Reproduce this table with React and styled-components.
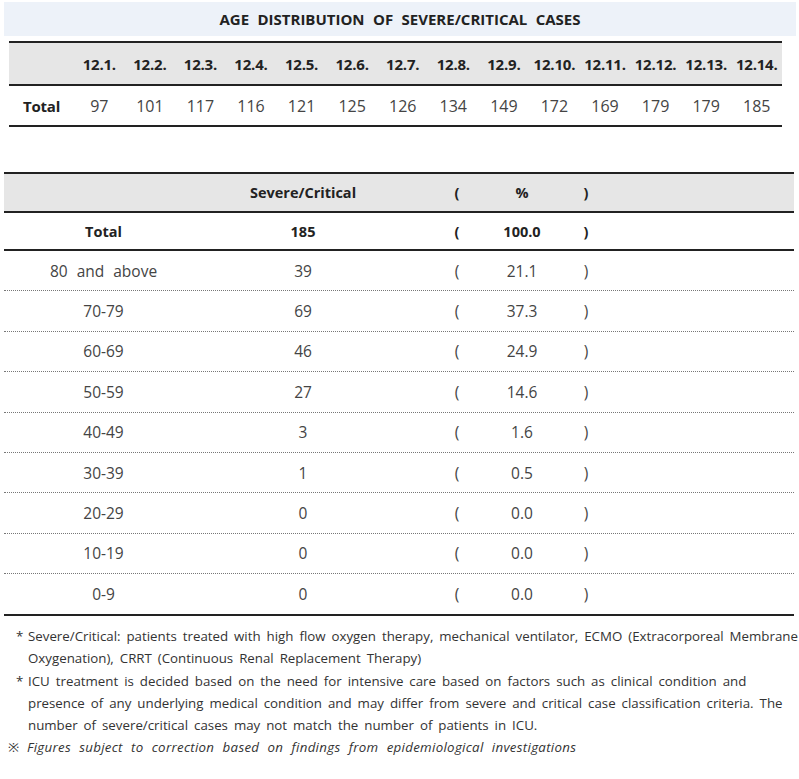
import React from 'react';
import styled, { createGlobalStyle } from 'styled-components';

const GlobalStyle = createGlobalStyle`
  body {
    margin: 0;
    background: #fff;
    font-family: "Open Sans", "Noto Sans", "Noto Sans CJK KR", sans-serif;
    color: #333;
  }
`;

const Page = styled.div`
  width: 799px;
  padding-top: 2px;
`;

const TitleBand = styled.div`
  margin-left: 4px;
  width: 792px;
  height: 34px;
  background: #edf2f9;
  display: flex;
  align-items: center;
  justify-content: center;
  font-weight: 700;
  font-size: 15px;
  color: #222;
  word-spacing: 4.5px;
`;

const TrendTable = styled.div`
  margin: 5px 0 0 9px;
  width: 773px;
  border-top: 2px solid #222;
  border-bottom: 2px solid #222;
`;

const TrendRow = styled.div`
  display: grid;
  grid-template-columns: 65px repeat(14, 1fr);
  align-items: center;
  height: ${p => p.$h}px;
  background: ${p => (p.$head ? '#e6e6e6' : 'transparent')};
  border-bottom: ${p => (p.$head ? '2px solid #222' : 'none')};
`;

const TrendCell = styled.div`
  text-align: center;
  font-size: ${p => (p.$bold ? 15 : 16)}px;
  font-weight: ${p => (p.$bold ? 700 : 400)};
  color: ${p => (p.$bold ? '#222' : '#444')};
  white-space: nowrap;
  letter-spacing: ${p => (p.$bold ? '-0.2px' : '0')};
`;

const AgeTable = styled.div`
  margin: 45px 0 0 4px;
  width: 790px;
  border-top: 2px solid #222;
  border-bottom: 2px solid #222;
`;

const AgeRow = styled.div`
  display: grid;
  grid-template-columns: 199px 227px 54px 76px 52px 1fr;
  align-items: center;
  height: ${p => p.$h}px;
  background: ${p => (p.$head ? '#e6e6e6' : 'transparent')};
  border-bottom: ${p => p.$line};
`;

const AgeCell = styled.div`
  text-align: center;
  font-size: ${p => (p.$bold ? 14.5 : 15.5)}px;
  font-weight: ${p => (p.$bold ? 700 : 400)};
  color: ${p => (p.$bold ? '#222' : '#444')};
  white-space: nowrap;
  word-spacing: 5px;
  padding-right: ${p => p.$pad || 0}px;
`;

const Notes = styled.div`
  padding: 9px 0 0 0;
  font-size: 13.3px;
  line-height: 22.2px;
  color: #333;
`;

const NoteLine = styled.div`
  display: flex;
  white-space: nowrap;
  word-spacing: ${p => (p.$italic ? 4.5 : 2.5)}px;
  letter-spacing: ${p => (p.$italic ? 0.3 : 0)}px;
  padding-left: ${p => p.$indent}px;
  font-style: ${p => (p.$italic ? 'italic' : 'normal')};
`;

const Mark = styled.span`
  display: inline-block;
  width: ${p => p.$w}px;
  font-style: normal;
`;

const dates = ['12.1.', '12.2.', '12.3.', '12.4.', '12.5.', '12.6.', '12.7.', '12.8.', '12.9.', '12.10.', '12.11.', '12.12.', '12.13.', '12.14.'];
const totals = [97, 101, 117, 116, 121, 125, 126, 134, 149, 172, 169, 179, 179, 185];

const ages = [
  ['80 and above', 39, '21.1'],
  ['70-79', 69, '37.3'],
  ['60-69', 46, '24.9'],
  ['50-59', 27, '14.6'],
  ['40-49', 3, '1.6'],
  ['30-39', 1, '0.5'],
  ['20-29', 0, '0.0'],
  ['10-19', 0, '0.0'],
  ['0-9', 0, '0.0'],
];

function AgeLine({ label, count, pct, bold, head, h, line }) {
  return (
    <AgeRow $h={h} $head={head} $line={line}>
      <AgeCell $bold={bold}>{label}</AgeCell>
      <AgeCell $bold={bold || head} $pad={27}>{count}</AgeCell>
      <AgeCell $bold={bold || head}>(</AgeCell>
      <AgeCell $bold={bold || head}>{pct}</AgeCell>
      <AgeCell $bold={bold || head}>)</AgeCell>
      <div />
    </AgeRow>
  );
}

export default function App() {
  return (
    <Page>
      <GlobalStyle />
      <TitleBand>AGE DISTRIBUTION OF SEVERE/CRITICAL CASES</TitleBand>

      <TrendTable>
        <TrendRow $head $h={41}>
          <div />
          {dates.map(d => (
            <TrendCell key={d} $bold>{d}</TrendCell>
          ))}
        </TrendRow>
        <TrendRow $h={39}>
          <TrendCell $bold>Total</TrendCell>
          {totals.map((v, i) => (
            <TrendCell key={i}>{v}</TrendCell>
          ))}
        </TrendRow>
      </TrendTable>

      <AgeTable>
        <AgeLine head h={37} label="" count="Severe/Critical" pct="%" line="2px solid #222" />
        <AgeLine bold h={36} label="Total" count="185" pct="100.0" line="2px solid #222" />
        {ages.map((a, i) => (
          <AgeLine
            key={a[0]}
            h={i === ages.length - 1 ? 40 : 39.4}
            label={a[0]}
            count={a[1]}
            pct={a[2]}
            line={i === ages.length - 1 ? 'none' : '1px dotted #777'}
          />
        ))}
      </AgeTable>

      <Notes>
        <NoteLine $indent={16}>
          <Mark $w={12}>*</Mark>Severe/Critical: patients treated with high flow oxygen therapy, mechanical ventilator, ECMO (Extracorporeal Membrane
        </NoteLine>
        <NoteLine $indent={28}>Oxygenation), CRRT (Continuous Renal Replacement Therapy)</NoteLine>
        <NoteLine $indent={16}>
          <Mark $w={12}>*</Mark>ICU treatment is decided based on the need for intensive care based on factors such as clinical condition and
        </NoteLine>
        <NoteLine $indent={28}>presence of any underlying medical condition and may differ from severe and critical case classification criteria. The</NoteLine>
        <NoteLine $indent={28}>number of severe/critical cases may not match the number of patients in ICU.</NoteLine>
        <NoteLine $indent={8} $italic>
          <Mark $w={19}>※</Mark>Figures subject to correction based on findings from epidemiological investigations
        </NoteLine>
      </Notes>
    </Page>
  );
}
